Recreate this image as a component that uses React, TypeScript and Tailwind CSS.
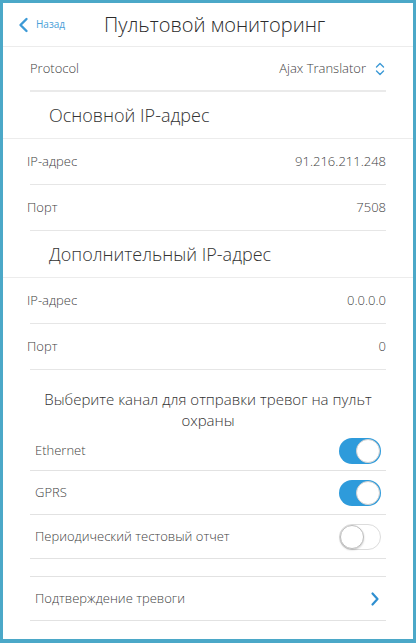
import * as React from "react"

function Toggle({ on }: { on: boolean }) {
  return (
    <div
      className={
        on
          ? "relative h-[26px] w-[42px] rounded-full bg-[#2e9bdb]"
          : "relative h-[26px] w-[42px] rounded-full border border-[#dcdcdc] bg-white"
      }
    >
      <div
        className={
          on
            ? "absolute right-[1px] top-[1px] h-[24px] w-[24px] rounded-full border border-[#d0d0d0] bg-white"
            : "absolute left-0 top-0 h-[24px] w-[24px] rounded-full border border-[#bdbdbd] bg-white shadow-[0_1px_2px_rgba(0,0,0,0.2)]"
        }
      />
    </div>
  )
}

function Row({ label, value }: { label: string; value?: React.ReactNode }) {
  return (
    <div className="mx-[27px] flex h-[46px] shrink-0 items-center justify-between border-b border-[#e6e6e6]">
      <span className="-ml-[3px] text-[13px] font-light text-[#3f3f3f]">{label}</span>
      <span className="text-[13px] font-light text-[#3f3f3f]">{value}</span>
    </div>
  )
}

function Section({ title }: { title: string }) {
  return (
    <div className="flex h-[47px] shrink-0 items-center border-b border-[#ececec] pl-[46px] text-[18px] font-light text-[#333]">
      {title}
    </div>
  )
}

function SwitchRow({ label, on, h = "h-[44px]" }: { label: string; on: boolean; h?: string }) {
  return (
    <div className={`mx-[27px] flex shrink-0 items-center justify-between border-b border-[#e2e2e2] pl-[5px] pr-[5px] ${h}`}>
      <span className="text-[13px] font-light text-[#3f3f3f]">{label}</span>
      <Toggle on={on} />
    </div>
  )
}

export default function App() {
  return (
    <div
      className="box-border flex h-[643px] w-[416px] flex-col border-[3px] border-b-4 border-[#4ba8c8] bg-white"
      style={{ fontFamily: '"Open Sans", "Liberation Sans", sans-serif' }}
    >
      {/* header */}
      <div className="flex h-[44px] shrink-0 items-center border-b border-[#ececec]">
        <div className="flex w-[101px] items-center pl-[15px]">
          <svg width="12" height="16" viewBox="0 0 12 16" className="mr-[6px]">
            <path d="M8.5 2 L2.5 8 L8.5 14" fill="none" stroke="#3d9ad6" strokeWidth="2.4" strokeLinecap="round" strokeLinejoin="round" />
          </svg>
          <span className="text-[10px] text-[#4aa0d8]">Назад</span>
        </div>
        <span className="text-[20px] font-light text-[#2b2b2b]">Пультовой мониторинг</span>
      </div>

      <div className="mx-[27px] flex h-[45px] shrink-0 items-center justify-between border-b-2 border-[#eaeaea]">
        <span className="text-[13px] font-light text-[#3f3f3f]">Protocol</span>
        <div className="flex items-center">
          <span className="text-[13px] font-light text-[#3f3f3f]">Ajax Translator</span>
          <svg width="10" height="16" viewBox="0 0 10 16" className="ml-[9px] mr-[1px]">
            <path d="M1.5 6 L5 2.5 L8.5 6" fill="none" stroke="#3d9ad6" strokeWidth="1.4" strokeLinecap="round" strokeLinejoin="round" />
            <path d="M1.5 10 L5 13.5 L8.5 10" fill="none" stroke="#3d9ad6" strokeWidth="1.4" strokeLinecap="round" strokeLinejoin="round" />
          </svg>
        </div>
      </div>

      <Section title="Основной IP-адрес" />
      <Row label="IP-адрес" value="91.216.211.248" />
      <Row label="Порт" value="7508" />

      <Section title="Дополнительный IP-адрес" />
      <Row label="IP-адрес" value="0.0.0.0" />
      <Row label="Порт" value="0" />

      <div className="shrink-0 px-[30px] pt-[19px] text-center text-[15px] leading-[21px] font-light text-[#333]">
        Выберите канал для отправки тревог на пульт охраны
      </div>

      <SwitchRow label="Ethernet" on h="h-[40px]" />
      <SwitchRow label="GPRS" on />
      <SwitchRow label="Периодический тестовый отчет" on={false} />

      <div className="h-[17px] shrink-0" />

      <div className="mx-[27px] flex h-[45px] shrink-0 items-center justify-between border-y border-[#e2e2e2] pl-[5px] pr-[6px]">
        <span className="text-[13px] font-light text-[#3f3f3f]">Подтверждение тревоги</span>
        <svg width="10" height="16" viewBox="0 0 10 16">
          <path d="M2.5 2.5 L7.5 8 L2.5 13.5" fill="none" stroke="#2f8fd0" strokeWidth="2.2" strokeLinecap="round" strokeLinejoin="round" />
        </svg>
      </div>
    </div>
  )
}
